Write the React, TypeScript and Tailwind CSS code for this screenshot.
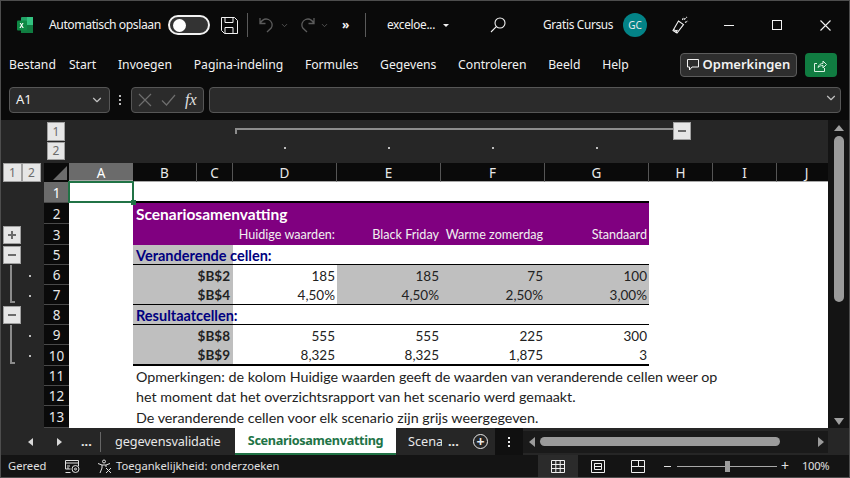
import type { ReactNode } from "react";
import { ChevronDown } from "lucide-react";

const ui = "font-['Noto_Sans',sans-serif]";
const sheet = "font-['Lato',sans-serif]";
const cols = "grid-cols-[43px_25px_64px_64px_36px_104px_104px_104px_104px_64px_64px_51px]";

const ExcelLogo = () => (
  <svg width="18" height="18" viewBox="0 0 18 18">
    <rect x="5" y="1" width="12" height="16" rx="1" fill="#21a366" />
    <rect x="11" y="1" width="6" height="8" fill="#33c481" />
    <rect x="5" y="9" width="12" height="8" fill="#107c41" />
    <rect x="1" y="4.500" width="10" height="10" rx="1" fill="#0e8a45" />
    <path d="M3.600 7l1.400 2.300L3.400 12h1.300l.9-1.700.9 1.700h1.300L6.200 9.300 7.600 7H6.400l-.8 1.500L4.800 7z" fill="#fff" />
  </svg>
);

const SaveIcon = () => (
  <svg width="17" height="17" viewBox="0 0 17 17" fill="none" stroke="#f2f2f2" strokeWidth="1">
    <path d="M.5 .5h13l3 3v13h-13l-3-3z" />
    <path d="M4 .5v5h8v-5M4 16.500v-6h8v6" />
  </svg>
);

const UndoIcon = ({ flip }: { flip?: boolean }) => (
  <svg width="16" height="16" viewBox="0 0 16 16" fill="none" stroke="#5c5c5c" strokeWidth="1.300" className={flip ? "-scale-x-100" : ""}>
    <path d="M1 1v5.500h5.500M1.200 6.300C3 3 6 1.200 9.500 2.500c3.500 1.500 4.500 5.500 2.700 8.500L8 15" />
  </svg>
);

const Sep = () => <div className="h-6 w-px bg-[#5a5a5a]" />;

function TitleBar() {
  return (
    <div className={`flex h-[44px] items-center pt-[4px] text-[12.200px] text-[#f2f2f2] ${ui}`}>
      <div className="ml-[15px] flex w-[33px]"><ExcelLogo /></div>
      <span className="w-[119px] whitespace-nowrap tracking-[-0.45px]">Automatisch opslaan</span>
      <div className="flex h-[20px] w-[42px] items-center rounded-full border-2 border-[#f2f2f2] bg-[#333] pl-[3px]">
        <div className="h-[13px] w-[13px] rounded-full bg-white" />
      </div>
      <div className="ml-[11px]"><SaveIcon /></div>
      <div className="ml-[9px]"><Sep /></div>
      <div className="ml-[11px]"><UndoIcon /></div>
      <ChevronDown size={9} className="ml-[5px] text-[#666]" />
      <div className="ml-[10px]"><UndoIcon flip /></div>
      <ChevronDown size={9} className="ml-[5px] text-[#666]" />
      <span className="ml-[13px] w-[10px] text-[12px] font-bold leading-none">»</span>
      <div className="ml-[13px]"><Sep /></div>
      <span className="ml-[21px] w-[56px] whitespace-nowrap text-[11.800px] tracking-[-0.3px]">exceloe...</span>
      <div className="h-0 w-0 border-x-[3px] border-t-[3px] border-x-transparent border-t-[#f2f2f2]" />
      <svg width="16" height="16" viewBox="0 0 16 16" fill="none" stroke="#f2f2f2" strokeWidth="1.100" className="ml-[41px]">
        <circle cx="10" cy="6" r="5" />
        <path d="M6.300 9.700L1 15" />
      </svg>
      <span className="ml-[37px] w-[80px] whitespace-nowrap text-[11.800px] tracking-[-0.3px]">Gratis Cursus</span>
      <div className="flex h-[24px] w-[24px] items-center justify-center rounded-full bg-[#038387] text-[10px] text-[#e8e8e8]">GC</div>
      <svg width="17" height="18" viewBox="0 0 17 18" fill="none" stroke="#f2f2f2" strokeWidth="1.100" className="ml-[25px]">
        <path d="M6.500 5L1 14.500l4 2.500 6.500-8.500z" />
        <path d="M1.500 13.500l3.500 2M4 17c0-1.500 1-2.500 1.500-3" />
        <path d="M10.500 4l1-3M13 6.500l3-1.500M12 3.500l3-2.500" strokeDasharray="2 1" />
      </svg>
      <div className="ml-[35px] h-px w-[10px] bg-[#f2f2f2]" />
      <div className="ml-[38px] h-[10px] w-[10px] border border-[#f2f2f2]" />
      <svg width="11" height="11" viewBox="0 0 11 11" stroke="#f2f2f2" strokeWidth="1.100" className="ml-[38px]">
        <path d="M.5 .5l10 10M10.500 .5l-10 10" />
      </svg>
    </div>
  );
}

const menuItems = ["Start", "Invoegen", "Pagina-indeling", "Formules", "Gegevens", "Controleren", "Beeld", "Help"];

function MenuBar() {
  return (
    <div className={`flex h-[40px] items-center text-[12.200px] text-[#f2f2f2] ${ui}`}>
      <span className="ml-[8px] mr-[13px]">Bestand</span>
      <div className="flex w-[611px] gap-[21.700px]">
        {menuItems.map((m) => (
          <span key={m} className="whitespace-nowrap">{m}</span>
        ))}
      </div>
      <div className="flex h-[24px] w-[117px] items-center justify-center gap-[4px] rounded-[4px] border border-[#5c5c5c] bg-[#2e2e2e] text-[13px] font-semibold">
        <svg width="12" height="12" viewBox="0 0 12 12" fill="none" stroke="#f2f2f2" strokeWidth="1">
          <path d="M.5 .5h11v7.500H5L2.500 11V8H.5z" />
        </svg>
        Opmerkingen
      </div>
      <div className="ml-[8px] flex h-[24px] w-[32px] items-center justify-center rounded-[4px] bg-[#107c41]">
        <svg width="13" height="13" viewBox="0 0 13 13" fill="none" stroke="#d8f0e2" strokeWidth="1">
          <path d="M3 4.500H.5v8h10V9" />
          <path d="M4 8.500C4.500 6 6.500 4.500 9 4.500V2l3.500 3.500L9 9V6.500c-2 0-3.500.5-5 2z" />
        </svg>
      </div>
    </div>
  );
}

function FormulaBar() {
  return (
    <div className={`flex h-[35px] items-start pt-[2px] pl-[8px] ${ui}`}>
      <div className="flex h-[26px] w-[101px] items-center justify-between rounded-[4px] border border-[#565656] bg-[#2b2b2b] pl-[6px] pr-[5px] text-[13px] text-[#f2f2f2]">
        A1
        <ChevronDown size={14} className="text-[#c0c0c0]" />
      </div>
      <div className="ml-[9px] mr-[10px] flex h-[26px] flex-col items-center justify-center gap-[2px]">
        <div className="h-[2px] w-[2px] bg-[#bbb]" />
        <div className="h-[2px] w-[2px] bg-[#bbb]" />
        <div className="h-[2px] w-[2px] bg-[#bbb]" />
      </div>
      <div className="flex h-[26px] w-[73px] items-center rounded-[4px] border border-[#565656] bg-[#2b2b2b] pl-[6px]">
        <svg width="14" height="14" viewBox="0 0 14 14" stroke="#6e6e6e" strokeWidth="1.200">
          <path d="M1 1l12 12M13 1L1 13" />
        </svg>
        <svg width="15" height="12" viewBox="0 0 15 12" fill="none" stroke="#6e6e6e" strokeWidth="1.200" className="ml-[9px]">
          <path d="M1 6.500L5.500 11 14 1" />
        </svg>
        <span className="ml-[9px] font-['Liberation_Serif',serif] text-[16px] italic text-[#e0e0e0]">fx</span>
      </div>
      <div className="ml-[5px] flex h-[26px] w-[632px] items-center justify-end rounded-[4px] border border-[#565656] bg-[#2b2b2b] pr-[2px]">
        <ChevronDown size={14} className="mb-[4px] text-[#c0c0c0]" />
      </div>
    </div>
  );
}

const OutlineBtn = ({ children, size = "h-[18px] w-[18px]" }: { children: ReactNode; size?: string }) => (
  <div className={`flex shrink-0 items-center justify-center border border-[#a0a0a0] bg-[#e6e6e6] text-[12px] leading-none text-[#6b6b6b] ${size} ${ui}`}>
    {children}
  </div>
);

const Minus = () => <div className="h-[2px] w-[8px] bg-[#6b6b6b]" />;

const Plus = () => (
  <div className="relative flex h-[8px] w-[8px] items-center justify-center">
    <div className="h-[2px] w-[8px] bg-[#6b6b6b]" />
    <div className="absolute h-[8px] w-[2px] bg-[#6b6b6b]" />
  </div>
);

const letters = ["B", "C", "D", "E", "F", "G", "H", "I"];

function ColumnHead() {
  return (
    <>
      <div className="flex items-center bg-[#262626] pl-[2px]">
        <OutlineBtn size="h-[19px] w-[19px]">1</OutlineBtn>
        <OutlineBtn size="h-[19px] w-[19px]">2</OutlineBtn>
      </div>
      <div className="flex items-end justify-end bg-[#0a0a0a] pb-[2px] pr-[2px]">
        <div className="h-0 w-0 border-b-[14px] border-l-[14px] border-b-[#6b6b6b] border-l-transparent" />
      </div>
      <div className={`flex items-center justify-center border-b-2 border-[#a8a8a8] bg-[#6b6b6b] pt-[3px] text-[13.500px] text-white ${ui}`}>A</div>
      {letters.map((l) => (
        <div key={l} className={`flex items-center justify-center border-b border-r border-b-[#a8a8a8] border-r-[#555] bg-[#0a0a0a] pt-[3px] text-[13.500px] text-[#e8e8e8] ${ui}`}>{l}</div>
      ))}
      {/* column J is cut off by the scrollbar, so its letter sits right of centre */}
      <div className={`flex items-center justify-center border-b border-b-[#a8a8a8] bg-[#0a0a0a] pl-[8px] pt-[3px] text-[13.500px] text-[#e8e8e8] ${ui}`}>J</div>
    </>
  );
}

const RowNum = ({ n, active }: { n: number; active?: boolean }) => (
  <div className={`flex items-center justify-center border-b border-[#4a4a4a] pt-[2px] text-[13.500px] ${ui} ${active ? "bg-[#6b6b6b] text-white" : "bg-[#0a0a0a] text-[#e8e8e8]"}`}>
    {n}
  </div>
);

// gutter cell for a grouped row: bracket line on the left, dot for the level
const GroupGutter = ({ last }: { last?: boolean }) => (
  <div className="flex bg-[#262626]">
    <div className={`ml-[9px] w-[5px] border-l-2 border-[#8c8c8c] ${last ? "mb-[2px] border-b-2" : ""}`} />
    <div className="ml-[14px] mt-[10px] h-[2px] w-[2px] bg-[#bdbdbd]" />
  </div>
);

const BtnGutter = ({ children }: { children: ReactNode }) => (
  <div className="flex items-center bg-[#262626] pl-[2px]">
    <OutlineBtn>{children}</OutlineBtn>
  </div>
);

const Empty = () => <div className="bg-[#262626]" />;
const Trail = () => <div className="col-span-3 bg-white" />;

const Label = ({ children }: { children: string }) => (
  <div className="col-span-2 flex items-center justify-end bg-[#bfbfbf] pr-[3px] pt-[2px] font-bold text-[#222]">{children}</div>
);

const Val = ({ children, grey, bottom }: { children: string; grey?: boolean; bottom?: boolean }) => (
  <div className={`flex items-center justify-end pr-[2px] pt-[2px] text-[#222] ${grey ? "bg-[#bfbfbf]" : "bg-white"} ${bottom ? "border-b border-black" : ""}`}>{children}</div>
);

function SectionRow({ text }: { text: string }) {
  return (
    <>
      <div className="relative z-10 col-span-2 flex items-center overflow-visible border-b border-black bg-[#bfbfbf] pl-[3px] pt-[2px] text-[14.500px] font-bold whitespace-nowrap text-[#000080]">{text}</div>
      <div className="col-span-4 border-b border-black bg-white" />
      <Trail />
    </>
  );
}

const Note = ({ children }: { children: string }) => (
  <div className="relative z-10 col-span-7 flex items-center bg-white pl-[3px] pt-[2px] text-[14.300px] whitespace-nowrap text-[#222]">{children}</div>
);

const TotalVal = ({ children }: { children: string }) => (
  <div className="flex items-center justify-end border-b-2 border-black bg-white pr-[2px] pt-[2px] text-[#222]">{children}</div>
);

function Sheet() {
  return (
    <div className={`grid ${cols} w-[827px] grid-rows-[22px_21px_19px_21px_21px_21px_20px_20px_20px_20px_20px_21px_20px_20px_22px] overflow-hidden text-[13.500px] ${sheet}`}>
      {/* outline header, levels and column bracket */}
      <div className="bg-[#262626]" />
      <div className="bg-[#262626] pt-[2px]"><div className="ml-[3px] w-[18px]"><OutlineBtn size="h-[19px] w-[18px]">1</OutlineBtn></div></div>
      <div className="col-span-3 bg-[#262626]" />
      <div className="col-span-4 bg-[#262626] pl-[2px] pt-[8px]">
        <div className="h-[6px] border-l-2 border-t-2 border-[#8c8c8c]" />
      </div>
      <div className="flex items-start bg-[#262626] pt-[2px]">
        <div className="mt-[6px] h-[2px] w-[24px] bg-[#8c8c8c]" />
        <OutlineBtn><Minus /></OutlineBtn>
      </div>
      <div className="col-span-2 bg-[#262626]" />

      <div className="bg-[#262626]" />
      <div className="bg-[#262626]"><div className="ml-[3px] w-[18px]"><OutlineBtn>2</OutlineBtn></div></div>
      <div className="col-span-3 bg-[#262626]" />
      {[0, 1, 2, 3].map((i) => (
        <div key={i} className="flex justify-center bg-[#262626] pt-[5px]">
          <div className="h-[2px] w-[2px] bg-[#bdbdbd]" />
        </div>
      ))}
      <div className="col-span-3 bg-[#262626]" />

      <ColumnHead />

      {/* row 1 */}
      <Empty />
      <RowNum n={1} active />
      <div className="relative z-20 bg-white">
        <div className="absolute -left-px -top-px h-[22px] w-[66px] border-2 border-[#217346]" />
        <div className="absolute -bottom-[2px] -right-[3px] h-[5px] w-[5px] bg-[#217346]" />
      </div>
      <div className="col-span-6 border-b-2 border-black bg-white" />
      <Trail />

      {/* row 2 */}
      <Empty />
      <RowNum n={2} />
      <div className="bg-white" />
      <div className="col-span-6 flex items-center bg-[#800080] pl-[3px] pt-[3px] text-[15.500px] font-bold text-white">Scenariosamenvatting</div>
      <Trail />

      {/* row 3 */}
      <BtnGutter><Plus /></BtnGutter>
      <RowNum n={3} />
      <div className="bg-white" />
      <div className="col-span-2 bg-[#800080]" />
      {["Huidige waarden:", "Black Friday", "Warme zomerdag", "Standaard"].map((h) => (
        <div key={h} className="flex items-end justify-end overflow-visible whitespace-nowrap bg-[#800080] pr-[2px] text-[12.600px] text-[#f0f0f0]">{h}</div>
      ))}
      <Trail />

      {/* row 5 */}
      <BtnGutter><Minus /></BtnGutter>
      <RowNum n={5} />
      <div className="bg-white" />
      <SectionRow text="Veranderende cellen:" />

      {/* rows 6, 7 */}
      <GroupGutter />
      <RowNum n={6} />
      <div className="bg-white" />
      <Label>$B$2</Label>
      <Val>185</Val>
      <Val grey>185</Val>
      <Val grey>75</Val>
      <Val grey>100</Val>
      <Trail />

      <GroupGutter last />
      <RowNum n={7} />
      <div className="bg-white" />
      <div className="col-span-2 flex items-center justify-end border-b border-black bg-[#bfbfbf] pr-[3px] pt-[2px] font-bold text-[#222]">$B$4</div>
      <Val bottom>4,50%</Val>
      <Val grey bottom>4,50%</Val>
      <Val grey bottom>2,50%</Val>
      <Val grey bottom>3,00%</Val>
      <Trail />

      {/* row 8 */}
      <BtnGutter><Minus /></BtnGutter>
      <RowNum n={8} />
      <div className="bg-white" />
      <SectionRow text="Resultaatcellen:" />

      {/* rows 9, 10 */}
      <GroupGutter />
      <RowNum n={9} />
      <div className="bg-white" />
      <Label>$B$8</Label>
      <Val>555</Val>
      <Val>555</Val>
      <Val>225</Val>
      <Val>300</Val>
      <Trail />

      <GroupGutter last />
      <RowNum n={10} />
      <div className="bg-white" />
      <div className="col-span-2 flex items-center justify-end border-b-2 border-black bg-[#bfbfbf] pr-[3px] pt-[2px] font-bold text-[#222]">$B$9</div>
      <TotalVal>8,325</TotalVal>
      <TotalVal>8,325</TotalVal>
      <TotalVal>1,875</TotalVal>
      <TotalVal>3</TotalVal>
      <Trail />

      {/* notes */}
      <Empty />
      <RowNum n={11} />
      <div className="bg-white" />
      <Note>Opmerkingen: de kolom Huidige waarden geeft de waarden van veranderende cellen weer op</Note>
      <div className="col-span-2 bg-white" />

      <Empty />
      <RowNum n={12} />
      <div className="bg-white" />
      <Note>het moment dat het overzichtsrapport van het scenario werd gemaakt.</Note>
      <div className="col-span-2 bg-white" />

      <Empty />
      <RowNum n={13} />
      <div className="bg-white" />
      <Note>De veranderende cellen voor elk scenario zijn grijs weergegeven.</Note>
      <div className="col-span-2 bg-white" />
    </div>
  );
}

function VScroll() {
  return (
    <div className="flex w-[21px] flex-col items-center justify-between bg-[#141414] pb-[3px] pt-[5px]">
      <div className="flex flex-col items-center">
        <div className="h-0 w-0 border-x-[5px] border-b-[6px] border-x-transparent border-b-[#a0a0a0]" />
        <div className="mt-[5px] h-[166px] w-[10px] rounded-full bg-[#9b9b9b]" />
      </div>
      <div className="h-0 w-0 border-x-[5px] border-t-[7px] border-x-transparent border-t-[#a0a0a0]" />
    </div>
  );
}

function TabBar() {
  return (
    <div className={`flex h-[27px] items-center bg-[#262626] text-[12.700px] text-[#e8e8e8] ${ui}`}>
      <div className="ml-[27px] h-0 w-0 border-y-[4px] border-r-[5px] border-y-transparent border-r-[#d8d8d8]" />
      <div className="ml-[24px] h-0 w-0 border-y-[4px] border-l-[5px] border-y-transparent border-l-[#d8d8d8]" />
      <span className="ml-[19px] w-[14px] font-bold leading-none">...</span>
      <div className="ml-[5px] h-[20px] w-px bg-[#666]" />
      <span className="ml-[14px] w-[120px] whitespace-nowrap tracking-[-0.1px]">gegevensvalidatie</span>
      <div className="flex h-full w-[161px] items-center justify-center border-b-2 border-[#217346] bg-white font-bold tracking-[-0.35px] text-[#217346]">Scenariosamenvatting</div>
      <span className="ml-[12px] w-[34px] overflow-hidden whitespace-nowrap">Scena</span>
      <span className="ml-[6px] w-[14px] font-bold leading-none">...</span>
      <div className="ml-[11px] flex h-[15px] w-[15px] items-center justify-center rounded-full border border-[#e8e8e8] text-[14px] font-bold leading-none">+</div>
      <div className="ml-[7px] flex h-full w-[28px] flex-col items-center justify-center gap-[2px] bg-[#101010]">
        <div className="h-[2px] w-[2px] bg-[#e8e8e8]" />
        <div className="h-[2px] w-[2px] bg-[#e8e8e8]" />
        <div className="h-[2px] w-[2px] bg-[#e8e8e8]" />
      </div>
      <div className="flex h-[22px] w-[305px] items-center bg-[#1a1a1a] pl-[6px]">
        <div className="h-0 w-0 border-y-[5px] border-r-[6px] border-y-transparent border-r-[#9b9b9b]" />
        <div className="ml-[5px] h-[9px] w-[240px] rounded-full bg-[#9b9b9b]" />
        <div className="ml-[38px] h-0 w-0 border-y-[5px] border-l-[6px] border-y-transparent border-l-[#9b9b9b]" />
      </div>
    </div>
  );
}

function StatusBar() {
  return (
    <div className={`flex h-[22px] items-center bg-[#141414] text-[11.200px] text-[#e0e0e0] ${ui}`}>
      <span className="ml-[7px] w-[57px]">Gereed</span>
      <svg width="15" height="13" viewBox="0 0 15 13" fill="none" stroke="#e0e0e0" strokeWidth="1">
        <path d="M.5 6V.5h13V6M.5 3h13M.5 6v3h5M.5 12.500h5" />
        <circle cx="10.500" cy="9" r="3.500" />
        <circle cx="10.500" cy="9" r="1" />
        <path d="M2 6h3M2 8h2" />
      </svg>
      <svg width="16" height="15" viewBox="0 0 16 15" fill="none" stroke="#e0e0e0" strokeWidth="1" className="ml-[17px]">
        <circle cx="7" cy="2.500" r="1.500" />
        <path d="M1 4.500l4 1.500h4l4-1.500M5 6v3l-2 5M9 6v2" />
        <path d="M9 9l5 5M14 9l-5 5" />
      </svg>
      <span className="ml-[3px] w-[422px] whitespace-nowrap">Toegankelijkheid: onderzoeken</span>
      <div className="flex h-full w-[40px] items-center justify-center bg-[#2b2b2b]">
        <svg width="14" height="13" viewBox="0 0 14 13" fill="none" stroke="#f0f0f0" strokeWidth="1">
          <path d="M.5 .5h13v12H.5zM.5 4.500h13M.5 8.500h13M4.800 .5v12M9.200 .5v12" />
        </svg>
      </div>
      <svg width="14" height="13" viewBox="0 0 14 13" fill="none" stroke="#f0f0f0" strokeWidth="1" className="ml-[13px]">
        <path d="M.5 .5h13v12H.5zM3.500 3.500h7v6h-7zM3.500 6.500h7" />
      </svg>
      <svg width="14" height="13" viewBox="0 0 14 13" fill="none" stroke="#f0f0f0" strokeWidth="1" className="ml-[26px]">
        <path d="M.5 .5h13v12H.5zM7.500 .5v6h-7M7.500 6.500h6" />
      </svg>
      <div className="ml-[19px] h-px w-[7px] bg-[#e0e0e0]" />
      <div className="relative ml-[6px] flex h-[12px] w-[100px] items-center">
        <div className="h-px w-full bg-[#a8a8a8]" />
        <div className="absolute left-[48px] h-[11px] w-[5px] bg-[#9b9b9b]" />
      </div>
      <span className="ml-[4px] text-[14px] leading-none">+</span>
      <span className="ml-[13px] tracking-[-0.3px]">100%</span>
    </div>
  );
}

export default function App() {
  return (
    <div className="flex h-[478px] w-[850px] flex-col overflow-hidden border border-[#4d4d4d] bg-[#0a0a0a]">
      <TitleBar />
      <MenuBar />
      <FormulaBar />
      <div className="flex h-[308px]">
        <Sheet />
        <VScroll />
      </div>
      <TabBar />
      <StatusBar />
    </div>
  );
}
